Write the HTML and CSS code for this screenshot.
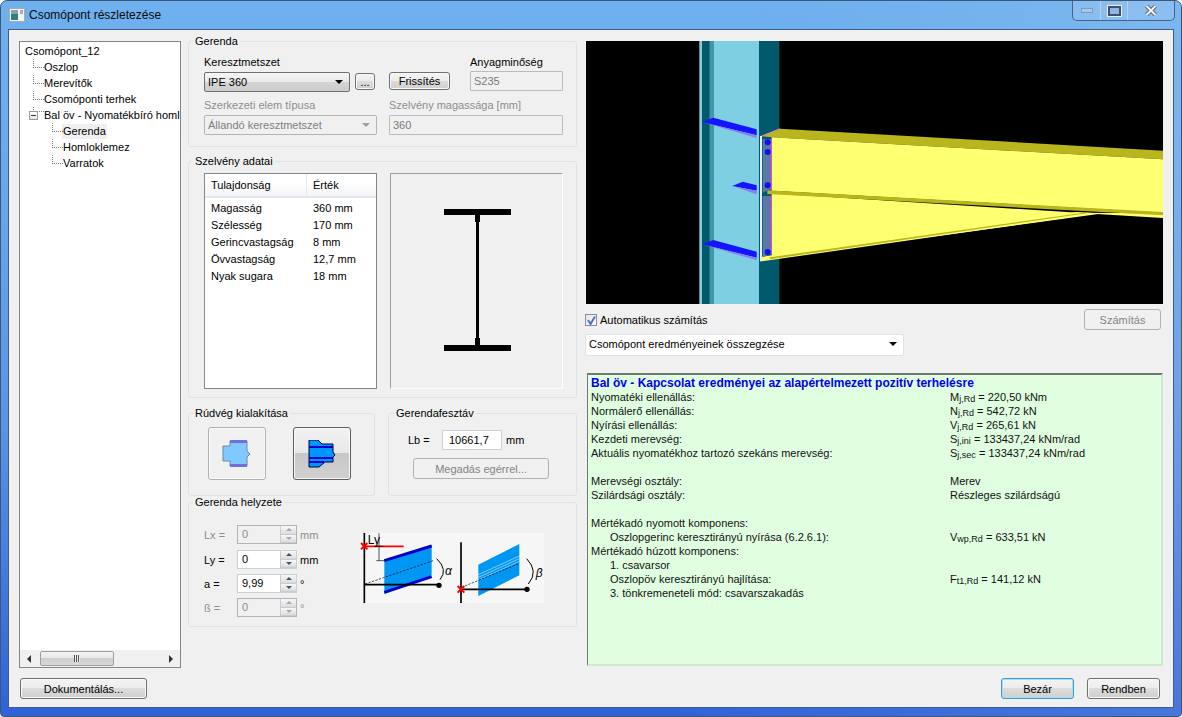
FILE: index.html
```html
<!DOCTYPE html>
<html lang="hu">
<head>
<meta charset="utf-8">
<title>Csomópont részletezése</title>
<link rel="stylesheet" href="styles.css">
</head>
<body>
<div class="window">
  <header class="titlebar">
    <svg class="appicon" width="16" height="14" viewBox="0 0 16 14"><rect x="0.5" y="0.5" width="15" height="13" fill="#f4f4f4" stroke="#aaa"/><rect x="2" y="2" width="7" height="10" fill="#2f7f82"/><rect x="2" y="2" width="7" height="4" fill="#7fa6a8"/><rect x="11" y="2" width="3" height="4" fill="#aac"/></svg>
    <span class="title">Csomópont részletezése</span>
    <div class="wincontrols">
      <div class="wc wc-min"><span class="minbar"></span></div>
      <div class="wc wc-max"><span class="maxbox"></span></div>
      <div class="wc wc-close"><svg width="12" height="11" viewBox="0 0 12 11"><path d="M1.5 1 L10.5 10 M10.5 1 L1.5 10" stroke="#5a6678" stroke-width="4"/><path d="M1.5 1 L10.5 10 M10.5 1 L1.5 10" stroke="#f4f4f4" stroke-width="2"/></svg></div>
    </div>
  </header>
  <main class="client">
    <div class="columns">
      <aside class="tree">
        <ul class="treebody">
          <li class="node root">Csomópont_12</li>
          <li class="node l1">Oszlop</li>
          <li class="node l1">Merevítők</li>
          <li class="node l1">Csomóponti terhek</li>
          <li class="node l1 open"><span class="expander"></span>Bal öv - Nyomatékbíró homlokl</li>
          <li class="node l2"><span class="selected">Gerenda</span></li>
          <li class="node l2">Homloklemez</li>
          <li class="node l2">Varratok</li>
        </ul>
        <div class="hscroll">
          <span class="arrow-l"></span>
          <span class="thumb"><span class="grip"></span></span>
          <span class="arrow-r"></span>
        </div>
      </aside>

      <section class="middle">
        <fieldset class="group g-gerenda">
          <legend>Gerenda</legend>
          <div class="frow labels">
            <span class="w-cs">Keresztmetszet</span>
            <span class="lab-anyag">Anyagminőség</span>
          </div>
          <div class="frow controls">
            <div class="combo w-cs"><span>IPE 360</span><i class="caret"></i></div>
            <button class="btn btn-dots">...</button>
            <button class="btn btn-fris">Frissítés</button>
            <div class="input dis w-s235">S235</div>
          </div>
          <div class="frow labels second dim">
            <span class="w-szerk">Szerkezeti elem típusa</span>
            <span>Szelvény magassága [mm]</span>
          </div>
          <div class="frow controls">
            <div class="combo dis w-szerk"><span>Állandó keresztmetszet</span><i class="caret"></i></div>
            <div class="input dis w-mag">360</div>
          </div>
        </fieldset>

        <fieldset class="group g-szelveny">
          <legend>Szelvény adatai</legend>
          <div class="szrow">
            <div class="proplist">
              <div class="prophead"><span class="pc1">Tulajdonság</span><span class="pc2">Érték</span></div>
              <div class="prow"><span class="pc1">Magasság</span><span>360 mm</span></div>
              <div class="prow"><span class="pc1">Szélesség</span><span>170 mm</span></div>
              <div class="prow"><span class="pc1">Gerincvastagság</span><span>8 mm</span></div>
              <div class="prow"><span class="pc1">Övvastagság</span><span>12,7 mm</span></div>
              <div class="prow"><span class="pc1">Nyak sugara</span><span>18 mm</span></div>
            </div>
            <div class="preview">
              <svg width="172" height="215" viewBox="0 0 172 215">
                <rect x="53" y="35" width="67" height="6" fill="#000"/>
                <rect x="53" y="171" width="67" height="6" fill="#000"/>
                <rect x="85" y="41" width="3" height="130" fill="#000"/>
                <rect x="84" y="41" width="5" height="7" fill="#000"/>
                <rect x="84" y="164" width="5" height="7" fill="#000"/>
              </svg>
            </div>
          </div>
        </fieldset>

        <div class="pair">
          <fieldset class="group g-rud">
            <legend>Rúdvég kialakítása</legend>
            <div class="iconbtns">
              <button class="btn iconbtn light">
                <svg width="30" height="28" viewBox="0 0 30 28">
                  <path d="M1 6 H8 V1 H25 V11 L28 14 L25 17 V26 H8 V21 H1 Z" fill="#80c8ff" stroke="#6a88a8"/>
                  <rect x="8" y="0" width="17" height="3" fill="#7070d8"/>
                  <rect x="8" y="24" width="17" height="3" fill="#7070d8"/>
                </svg>
              </button>
              <button class="btn iconbtn pressed">
                <svg width="28" height="28" viewBox="0 0 28 28">
                  <path d="M1 0 H10 L14 4 H25 V12 L27 15 L25 17 V22 H17 L11 27 H1 Z" fill="#0096ff" stroke="#003"/>
                  <rect x="1" y="6" width="24" height="2" fill="#0000d0"/>
                  <rect x="1" y="17" width="24" height="2" fill="#0000d0"/>
                  <rect x="1" y="21" width="15" height="2" fill="#0000d0"/>
                </svg>
              </button>
            </div>
          </fieldset>
          <fieldset class="group g-fesz">
            <legend>Gerendafesztáv</legend>
            <div class="lbrow"><span class="lb">Lb =</span><div class="input lbinput">10661,7</div><span>mm</span></div>
            <button class="btn btn-dis btn-meg">Megadás egérrel...</button>
          </fieldset>
        </div>

        <fieldset class="group g-hely">
          <legend>Gerenda helyzete</legend>
          <div class="helybody">
            <div class="spins">
              <div class="spinrow dim r-lx"><span class="sl">Lx =</span><div class="spin dis"><span class="sv">0</span><span class="sb"><i class="up"></i><i class="dn"></i></span></div><span>mm</span></div>
              <div class="spinrow r-ly"><span class="sl">Ly =</span><div class="spin"><span class="sv">0</span><span class="sb"><i class="up"></i><i class="dn"></i></span></div><span>mm</span></div>
              <div class="spinrow r-a"><span class="sl">a =</span><div class="spin"><span class="sv">9,99</span><span class="sb"><i class="up"></i><i class="dn"></i></span></div><span>°</span></div>
              <div class="spinrow dim r-b"><span class="sl">ß =</span><div class="spin dis"><span class="sv">0</span><span class="sb"><i class="up"></i><i class="dn"></i></span></div><span>°</span></div>
            </div>
            <svg class="diagram" width="184" height="70" viewBox="525 395 552 210">
              <rect x="525" y="395" width="552" height="210" fill="#f6f6f6"/>
              <path d="M598 478 L740 432 V522 L598 578 Z" fill="#0096f4"/>
              <path d="M598 478 L740 434 M598 573 L740 526" stroke="#0000c8" stroke-width="9"/>
              <path d="M540 548 L745 478" stroke="#000" stroke-width="2" stroke-dasharray="7 4"/>
              <path d="M538 395 V605 M538 550 H762" stroke="#000" stroke-width="5"/>
              <circle cx="762" cy="552" r="8" fill="#000"/>
              <path d="M538 435 H656" stroke="#f00" stroke-width="5"/>
              <path d="M528 425 L547 444 M547 425 L528 444" stroke="#f00" stroke-width="6"/>
              <path d="M582 396 V478 M574 478 H600 M574 435 H595" stroke="#000" stroke-width="2"/>
              <path d="M755 472 Q790 505 765 535" fill="none" stroke="#000" stroke-width="3"/>
              <text x="548" y="429" class="dt">Ly</text>
              <text x="780" y="520" class="dt it">α</text>
              <path d="M880 490 L1003 428 V522 L880 584 Z" fill="#0096f4"/>
              <path d="M880 528 L1003 472 M880 536 L1003 480 M880 520 L1003 464" stroke="#fff" stroke-width="1.5" fill="none"/>
              <path d="M830 558 L1003 486" stroke="#000" stroke-width="2" stroke-dasharray="7 4"/>
              <path d="M828 423 V605 M828 564 H1026" stroke="#000" stroke-width="5"/>
              <circle cx="1026" cy="564" r="8" fill="#000"/>
              <path d="M818 554 L838 574 M838 554 L818 574" stroke="#f00" stroke-width="6"/>
              <path d="M1025 472 Q1062 510 1030 548" fill="none" stroke="#000" stroke-width="3"/>
              <text x="1052" y="526" class="dt it">β</text>
            </svg>
          </div>
        </fieldset>
      </section>

      <section class="right">
        <svg class="view3d" width="577" height="263" viewBox="-312 3 1731 789">
          <rect x="-312" y="3" width="1731" height="789" fill="#000"/>
          <rect x="28" y="3" width="9" height="789" fill="#7fd0e0"/>
          <rect x="37" y="3" width="21" height="789" fill="#005a6c"/>
          <rect x="58" y="3" width="14" height="789" fill="#3f97a8"/>
          <rect x="72" y="3" width="135" height="789" fill="#7dcfe1"/>
          <rect x="207" y="3" width="61" height="789" fill="#005a6c"/>
          <path d="M35 246 L70 233 L200 268 V286 Z" fill="#1414ff"/>
          <path d="M35 246 L200 286 V294 Z" fill="#8a80f0"/>
          <path d="M35 613 L70 600 L200 635 V653 Z" fill="#1414ff"/>
          <path d="M35 613 L200 653 V661 Z" fill="#8a80f0"/>
          <path d="M127 438 L158 425 L200 436 V452 Z" fill="#1414ff"/>
          <path d="M127 438 L200 452 V463 Z" fill="#8a80f0"/>
          <path d="M212 288 L270 266 L1419 332 V358 L245 292 Z" fill="#b9b51c"/>
          <path d="M216 288 L270 266" stroke="#e070e0" stroke-width="3"/>
          <path d="M245 292 L1419 358 V518 L245 452 Z" fill="#ffff72"/>
          <path d="M245 460 L1225 522 L245 655 Z" fill="#ffff72"/>
          <path d="M1160 518 L1419 520 V534 L1220 522 Z" fill="#ffff72"/>
          <path d="M232 451 L1419 516 V526 L232 462 Z" fill="#b9b51c"/>
          <path d="M216 664 L1225 520 L1160 516 L216 650 Z" fill="#ffff72"/>
          <path d="M240 652 L1180 518 L1190 520 L240 658 Z" fill="#b9b51c"/>
          <rect x="210" y="288" width="6" height="376" fill="#e8f0f4"/>
          <path d="M218 298 H242 V448 L218 458 Z" fill="#5b78a8"/>
          <path d="M218 468 H242 V642 L218 652 Z" fill="#5b78a8"/>
          <path d="M243 298 V448 M243 468 V640" stroke="#ff40ff" stroke-width="3"/>
          <circle cx="233" cy="307" r="9" fill="#1010f0"/>
          <circle cx="233" cy="336" r="9" fill="#1010f0"/>
          <circle cx="233" cy="436" r="9" fill="#1010f0"/>
          <circle cx="233" cy="636" r="9" fill="#1010f0"/>
        </svg>
        <div class="calcrow">
          <label class="check"><span class="box"><svg width="11" height="11" viewBox="0 0 11 11"><path d="M2 5 L4.5 9 L9 1.5" fill="none" stroke="#5470c0" stroke-width="2"/></svg></span>Automatikus számítás</label>
          <button class="btn btn-dis btn-szam">Számítás</button>
        </div>
        <div class="combo resultcombo"><span>Csomópont eredményeinek összegzése</span><i class="caret"></i></div>
        <div class="results">
          <h2>Bal öv - Kapcsolat eredményei az alapértelmezett pozitív terhelésre</h2>
          <div class="rgrid">
            <span>Nyomatéki ellenállás:</span><span>M<sub>j,Rd</sub> = 220,50 kNm</span>
            <span>Normálerő ellenállás:</span><span>N<sub>j,Rd</sub> = 542,72 kN</span>
            <span>Nyírási ellenállás:</span><span>V<sub>j,Rd</sub> = 265,61 kN</span>
            <span>Kezdeti merevség:</span><span>S<sub>j,ini</sub> = 133437,24 kNm/rad</span>
            <span>Aktuális nyomatékhoz tartozó szekáns merevség:</span><span>S<sub>j,sec</sub> = 133437,24 kNm/rad</span>
            <span class="blank"></span><span></span>
            <span>Merevségi osztály:</span><span>Merev</span>
            <span>Szilárdsági osztály:</span><span>Részleges szilárdságú</span>
            <span class="blank"></span><span></span>
            <span>Mértékadó nyomott komponens:</span><span></span>
            <span class="ind">Oszlopgerinc keresztirányú nyírása (6.2.6.1):</span><span>V<sub>wp,Rd</sub> = 633,51 kN</span>
            <span>Mértékadó húzott komponens:</span><span></span>
            <span class="ind">1. csavarsor</span><span></span>
            <span class="ind">Oszlopöv keresztirányú hajlítása:</span><span>F<sub>t1,Rd</sub> = 141,12 kN</span>
            <span class="ind">3. tönkremeneteli mód: csavarszakadás</span><span></span>
          </div>
        </div>
      </section>
    </div>
    <footer class="footer">
      <button class="btn btn-doc">Dokumentálás...</button>
      <div class="footer-right">
        <button class="btn btn-foot default">Bezár</button>
        <button class="btn btn-foot">Rendben</button>
      </div>
    </footer>
  </main>
</div>
</body>
</html>
```

FILE: styles.css
```css
* { box-sizing: border-box; }
html, body { margin: 0; padding: 0; width: 1182px; height: 717px; overflow: hidden; background: #fff; }
body { font-family: "Liberation Sans", Tahoma, sans-serif; font-size: 11px; color: #000; line-height: 14px; }
.window {
  width: 1182px; height: 717px; display: flex; flex-direction: column;
  padding: 0 7px 8px; border-radius: 7px 7px 4px 4px;
  border: 1px solid #3c5878;
  background: linear-gradient(100deg, rgba(255,255,255,0) 60%, rgba(255,255,255,.12) 100%), linear-gradient(180deg, #6fb0ee 0, #6aa8ec 25%, #5a92e4 60%, #2f62d6 100%);
}
.titlebar { height: 28px; flex: none; display: flex; align-items: center; margin: 0 -1px; padding-left: 2px; position: relative; }
.appicon { margin-top: -1px; }
.title { margin-left: 4px; font-size: 12px; color: #0a0a0a; }
.wincontrols {
  position: absolute; right: 0; top: 0; height: 20px; width: 103px; display: flex;
  border: 1px solid #46628a; border-top: 0; border-radius: 0 0 5px 5px; background: rgba(255,255,255,.12);
}
.wc { display: flex; align-items: center; justify-content: center; border-right: 1px solid #b6d0ee; }
.wc-min { width: 28px; } .wc-max { width: 27px; } .wc-close { flex: 1; border: 0; }
.minbar { width: 12px; height: 5px; background: #a8c8ec; border: 1px solid #7a9cc4; }
.maxbox { width: 13px; height: 10px; border: 2px solid #44506a; background: #8ab8ea; outline: 1px solid #e8eef6; }
.client { flex: 1; background: #f0f0f0; border: 1px solid #3f5d8c; display: flex; flex-direction: column; padding: 11px 11px 8px 10px; min-height: 0; }
.columns { flex: 1; display: flex; min-height: 0; }

/* tree */
.tree { width: 162px; flex: none; background: #fff; border: 1px solid #82878c; display: flex; flex-direction: column; height: 627px; }
.treebody { flex: 1; list-style: none; margin: 0; padding: 1px 0 0; overflow: hidden; }
.node { height: 16px; line-height: 16px; white-space: nowrap; position: relative; overflow: visible; }
.root { padding-left: 5px; }
.l1 { padding-left: 24px; }
.l2 { padding-left: 43px; }
.l1::before, .l2::before { content: ""; position: absolute; top: 0; height: 8px; border-left: 1px dotted #777; border-bottom: 1px dotted #777; }
.l1::before { left: 13px; width: 10px; }
.l2::before { left: 32px; width: 10px; }
.open::before { height: 4px; }
.expander { position: absolute; left: 9px; top: 4px; width: 9px; height: 9px; border: 1px solid #9a9a9a; background: linear-gradient(#fff, #e4e4e4); z-index: 1; }
.expander::after { content: ""; position: absolute; left: 1px; top: 3px; width: 5px; height: 1px; background: #333; }
.selected { background: #f0f0f0; display: inline-block; padding: 0 1px; margin-left: -1px; line-height: 15px; }
.hscroll { height: 17px; flex: none; background: #f0f0f0; display: flex; align-items: center; padding: 0 1px; position: relative; }
.arrow-l { width: 0; height: 0; border: 4px solid transparent; border-right: 4px solid #333; border-left: 0; margin-left: 6px; }
.thumb { width: 74px; height: 15px; margin-left: 9px; border: 1px solid #9aa0a6; border-radius: 2px; background: linear-gradient(#f4f4f4 0, #e6e6e6 50%, #cfcfcf 50%, #d8d8d8 100%); display: flex; align-items: center; justify-content: center; }
.grip { width: 6px; height: 7px; background: repeating-linear-gradient(90deg, #555 0, #555 1px, #eee 1px, #eee 2px); }
.arrow-r { width: 0; height: 0; border: 4px solid transparent; border-left: 4px solid #333; border-right: 0; margin-left: auto; margin-right: 6px; }

/* groups */
.middle { width: 389px; margin-left: 7px; flex: none; display: flex; flex-direction: column; }
.group { margin: 0; padding: 0; border: 1px solid #dce3ea; border-radius: 3px; min-width: 0; position: relative; }
.group legend { padding: 0 2px; line-height: 14px; height: 14px; font-size: 11px; }
.g-gerenda legend, .g-szelveny legend, .g-hely legend { margin-left: -11px; }
.g-rud legend { margin-left: -15px; }
.g-fesz legend { margin-left: -14px; }
.g-gerenda { height: 113px; padding: 7px 0 0 15px; margin-top: -7px; }
.g-szelveny { height: 244px; margin-top: 7px; padding: 5px 0 0 15px; }
.pair { display: flex; justify-content: space-between; margin-top: 8px; }
.g-rud { width: 187px; height: 90px; padding: 7px 0 0 19px; }
.g-fesz { width: 189px; height: 90px; padding: 10px 0 0 19px; }
.g-hely { height: 132px; margin-top: -1px; padding: 7px 0 0 15px; }

.frow { display: flex; }
.labels { height: 14px; }
.second { margin-top: 6px; }
.controls { margin-top: 3px; align-items: flex-start; }
.second + .controls { margin-top: 3px; }
.dim { color: #8d8d8d; }
.w-cs { width: 146px; }
.lab-anyag { margin-left: 120px; }
.w-szerk { width: 173px; margin-right: 12px; }
.w-s235 { width: 93px; margin-left: 20px; margin-top: -1px; }
.w-mag { width: 174px; }

.combo { height: 20px; display: flex; align-items: center; justify-content: space-between; border: 1px solid #707070; border-radius: 2px; padding: 0 6px 0 3px; background: linear-gradient(#f6f6f6 0, #e8e8e8 50%, #d4d4d4 50%, #cdcdcd 100%); }
.combo.dis { background: #f0f0f0; border-color: #b4b4b4; color: #7e7e7e; }
.caret { width: 0; height: 0; border: 4px solid transparent; border-top: 4px solid #000; border-bottom: 0; display: block; margin-left: 4px; }
.combo.dis .caret { border-top-color: #a0a0a0; }
.input { height: 20px; line-height: 18px; border: 1px solid #c8d0d8; background: #fff; padding: 0 3px; border-radius: 1px; }
.input.dis { background: #f0f0f0; border-color: #b8bcc0; color: #7a7a7a; }

.btn { font: inherit; color: #000; display: block; padding: 0; border: 1px solid #707070; border-radius: 3px; background: linear-gradient(#f4f4f4 0, #ececec 48%, #dcdcdc 50%, #cfcfcf 100%); box-shadow: inset 0 0 0 1px #f8f8f8; }
.btn-dots { width: 20px; height: 17px; margin: 1px 0 0 5px; line-height: 10px; }
.btn-fris { width: 61px; height: 18px; margin-left: 14px; line-height: 14px; }
.btn-dis { background: #f0f0f0; border-color: #adb2b5; color: #838383; box-shadow: none; }
.btn-meg { width: 136px; height: 21px; margin: 8px 0 0 5px; }
.btn-szam { width: 77px; height: 21px; }
.btn-doc { width: 127px; height: 21px; }
.btn-foot { width: 73px; height: 21px; }
.btn-foot.default { border-color: #3a9bd8; box-shadow: inset 0 0 0 1px #a6e0f8; }

/* section data */
.szrow { display: flex; }
.proplist { width: 173px; height: 216px; background: #fff; border: 1px solid #82878c; }
.prophead { display: flex; height: 24px; align-items: center; padding-bottom: 1px; background: linear-gradient(#fff, #fff 40%, #f2f4f7 100%); border-bottom: 2px solid #e4e8ec; }
.pc1 { width: 102px; padding-left: 6px; flex: none; }
.prophead .pc1 { padding-left: 6px; border-right: 1px solid #e6e9ee; height: 22px; line-height: 22px; }
.pc2 { padding-left: 6px; }
.prow { display: flex; height: 17px; line-height: 17px; position: relative; top: 2px; }
.prow .pc1 + span { padding-left: 6px; }
.preview { width: 173px; height: 216px; margin-left: 13px; border-top: 1px solid #9e9e9e; border-left: 1px solid #9e9e9e; border-bottom: 1px solid #fff; border-right: 1px solid #fff; }
.preview svg { display: block; }

.iconbtns { display: flex; gap: 27px; }
.iconbtn { width: 58px; height: 53px; display: flex; align-items: center; justify-content: center; }
.iconbtn.light { background: #f0f0f0; border-color: #b0b0b0; box-shadow: inset 0 0 0 1px #fafafa; }
.iconbtn.pressed { background: linear-gradient(#f2f2f2 0, #e8e8e8 48%, #c8c8c8 50%, #d0d0d0 100%); border-color: #5f5f5f; }

.lbrow { display: flex; align-items: center; height: 20px; }
.lb { width: 33px; }
.lbinput { width: 60px; margin-left: 1px; margin-right: 4px; padding-left: 6px; }

.helybody { display: flex; position: relative; }
.spins { width: 156px; flex: none; }
.spinrow { display: flex; align-items: center; height: 19px; }
.r-lx { margin-top: 9px; }
.r-ly { margin-top: 6px; }
.r-a { margin-top: 5px; }
.r-b { margin-top: 5px; }
.sl { width: 33px; }
.spin { width: 60px; height: 19px; display: flex; border: 1px solid #c8d0d8; background: #fff; margin-right: 3px; }
.spin.dis { background: #f0f0f0; border-color: #b0b4b8; }
.sv { flex: 1; padding-left: 4px; line-height: 17px; }
.sb { width: 16px; display: flex; flex-direction: column; border-left: 1px solid #c8ccd0; }
.sb i { flex: 1; display: flex; align-items: center; justify-content: center; background: linear-gradient(#f8f8f8, #dcdcdc); border-bottom: 1px solid #c8ccd0; }
.sb i::after { content: ""; width: 0; height: 0; border: 3px solid transparent; }
.up::after { border-bottom: 3px solid #44546a !important; border-top: 0 !important; }
.dn::after { border-top: 3px solid #44546a !important; border-bottom: 0 !important; }
.dis .up::after { border-bottom-color: #a8a8a8 !important; }
.dis .dn::after { border-top-color: #a8a8a8 !important; }
.diagram { margin: 17px 0 0 0; flex: none; }
.dt { font-family: "Liberation Sans", sans-serif; font-size: 36px; fill: #000; }
.it { font-style: italic; }

/* right */
.right { width: 577px; margin-left: 9px; flex: none; display: flex; flex-direction: column; }
.view3d { display: block; flex: none; }
.calcrow { display: flex; align-items: center; justify-content: space-between; height: 21px; margin-top: 5px; padding-right: 2px; }
.check { display: flex; align-items: center; gap: 3px; margin-left: -1px; }
.box { width: 12px; height: 12px; border: 1px solid #8a8f96; background: linear-gradient(135deg, #e4e6ea, #fff); display: block; }
.box svg { display: block; }
.resultcombo { width: 319px; height: 23px; margin: 4px 0 0 -1px; border: 1px solid #dce3ea; background: #fff; padding: 0 6px 2px 3px; }
.results { width: 576px; height: 293px; margin: 17px 0 0 1px; flex: none; border: 2px solid #707a70; border-bottom-color: #cfe8cf; border-right-color: #cfe8cf; border-left-width: 1px; border-top-width: 2px; background: #e0ffe0; padding: 1px 3px; font-size: 11px; line-height: 14px; }
.results h2 { margin: 0; font-size: 12px; font-weight: bold; color: #0000f0; line-height: 14px; }
.rgrid { display: grid; grid-template-columns: 359px 1fr; grid-auto-rows: 14px; color: #111; }
.rgrid span { white-space: nowrap; }
.rgrid .ind { padding-left: 19px; }
.rgrid sub { font-size: 9px; line-height: 0; vertical-align: -1px; }

.footer { display: flex; justify-content: space-between; flex: none; height: 21px; margin-top: 12px; padding: 0 2px 0 1px; }
.footer-right { display: flex; gap: 13px; }
```
